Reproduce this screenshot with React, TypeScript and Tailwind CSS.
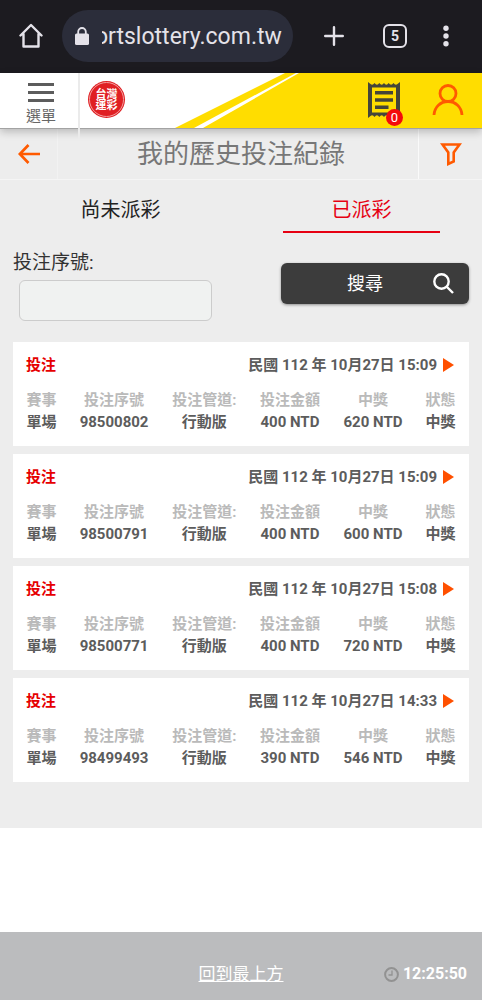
import { ReactNode, useEffect, useRef, useState } from "react";

interface Bet {
  type: string;
  serial: string;
  channel: string;
  amount: string;
  prize: string;
  status: string;
  date: string;
}

const bets: Bet[] = [
  {
    type: "單場",
    serial: "98500802",
    channel: "行動版",
    amount: "400 NTD",
    prize: "620 NTD",
    status: "中獎",
    date: "民國 112 年 10月27日 15:09",
  },
  {
    type: "單場",
    serial: "98500791",
    channel: "行動版",
    amount: "400 NTD",
    prize: "600 NTD",
    status: "中獎",
    date: "民國 112 年 10月27日 15:09",
  },
  {
    type: "單場",
    serial: "98500771",
    channel: "行動版",
    amount: "400 NTD",
    prize: "720 NTD",
    status: "中獎",
    date: "民國 112 年 10月27日 15:08",
  },
  {
    type: "單場",
    serial: "98499493",
    channel: "行動版",
    amount: "390 NTD",
    prize: "546 NTD",
    status: "中獎",
    date: "民國 112 年 10月27日 14:33",
  },
];

const columns = ["賽事", "投注序號", "投注管道:", "投注金額", "中獎", "狀態"];

const BrowserBar = () => {
  const urlRef = useRef<HTMLInputElement>(null);

  // keep the end of the address in view
  useEffect(() => {
    if (urlRef.current) {
      urlRef.current.scrollLeft = urlRef.current.scrollWidth;
    }
  }, []);

  return (
    <div className="flex items-center bg-[#1c1b20] pt-[10px] pb-[11px] text-[#e4e2e9]">
      <button aria-label="Home" className="flex w-[62px] justify-center">
        <svg width="24" height="26" viewBox="0 0 24 26" fill="none" stroke="currentColor" strokeWidth="2.4" strokeLinejoin="round" strokeLinecap="round">
          <path d="M1.5 12.5 L12 2 L22.5 12.5 M4.5 11 V23.5 H19.5 V11" />
        </svg>
      </button>
      <div className="flex h-[52px] min-w-0 flex-1 items-center rounded-full bg-[#2b2d3a] pr-[11px] pl-[13px]">
        <svg className="shrink-0" width="14" height="18" viewBox="0 0 14 18">
          <path d="M3.2 8 V4.8 a3.8 3.8 0 0 1 7.6 0 V8" fill="none" stroke="currentColor" strokeWidth="1.8" />
          <rect x="0" y="6.5" width="14" height="11.5" rx="1.6" fill="currentColor" />
        </svg>
        <input
          ref={urlRef}
          type="text"
          aria-label="Address"
          defaultValue="ortslottery.com.tw"
          className="ml-[13px] min-w-0 flex-1 bg-transparent pt-[3px] text-[23px] outline-none"
        />
      </div>
      <button aria-label="New tab" className="ml-[11px] flex w-[60px] justify-center">
        <svg width="20" height="20" viewBox="0 0 20 20" stroke="currentColor" strokeWidth="2.4" strokeLinecap="round">
          <path d="M1.2 10 H18.8 M10 1.2 V18.8" />
        </svg>
      </button>
      <button className="flex w-[62px] justify-center">
        <span className="flex h-6 w-6 items-center justify-center rounded-md border-2 border-[#e4e2e9] text-sm font-bold">5</span>
      </button>
      <button aria-label="More" className="mr-4 flex w-10 justify-center">
        <svg width="6" height="22" viewBox="0 0 6 22" fill="currentColor">
          <circle cx="3" cy="3.2" r="2.7" />
          <circle cx="3" cy="11" r="2.7" />
          <circle cx="3" cy="18.8" r="2.7" />
        </svg>
      </button>
    </div>
  );
};

const SiteHeader = () => {
  return (
    <header className="relative z-10 flex h-14 border-b border-[#a3a3a3] bg-white shadow-[0_3px_8px_rgba(0,0,0,0.22)]">
      <button className="flex w-[78px] flex-col items-center pt-[10px] pl-1 text-[#666]">
        <svg width="26" height="20" viewBox="0 0 26 20" stroke="#5c5c5c" strokeWidth="3">
          <path d="M0 1.5 H26 M0 9.5 H26 M0 17.5 H26" />
        </svg>
        <span className="mt-[5px] text-[15px] leading-4">選單</span>
      </button>
      <div className="h-[66px] w-0.5 shrink-0 bg-[#ebebeb]"></div>
      <a href="#" aria-label="台灣運彩" className="mt-2 ml-2 flex h-[37px] w-[37px] shrink-0 items-center justify-center rounded-full bg-[#e01f23] p-px">
        <span className="flex h-full w-full flex-col items-center justify-center rounded-full border border-[#f3a0a0] text-[11px] leading-[11px] font-bold text-white">
          <span>台灣</span>
          <span>運彩</span>
        </span>
      </a>
      <div className="flex min-w-0 flex-1">
        <svg className="h-full w-[180px] shrink-0" viewBox="0 0 180 56" preserveAspectRatio="none">
          <path d="M50 56 L160 0 H180 V56 Z" fill="#ffdd00" />
          <path d="M69 56 L171 0 H174 L78 56 Z" fill="#fff" />
        </svg>
        <div className="flex flex-1 justify-end bg-[#ffdd00]">
          <button aria-label="投注單" className="relative mt-[9px] mr-8 h-9 w-8">
            <svg width="32" height="36" viewBox="0 0 32 36">
              <path
                d="M0 0 L2.5 2 Q4.5 4 6.5 1 Q9 4.5 11.3 1 Q13.7 4.5 16 1 Q18.3 4.5 20.7 1 Q23 4.5 25.5 1 Q27.5 4 29.5 2 L32 0 V36 L29.5 34 Q27.5 32 25.5 35 Q23 31.5 20.7 35 Q18.3 31.5 16 35 Q13.7 31.5 11.3 35 Q9 31.5 6.5 35 Q4.5 32 2.5 34 L0 36 Z"
                fill="#454539"
              />
              <rect x="4" y="5.5" width="24" height="25" fill="#ffdd00" />
              <path d="M7 10.7 H25 M7 18 H25 M7 25.2 H20.5" stroke="#454539" strokeWidth="3.6" />
            </svg>
            <span className="absolute top-[27px] left-[18px] flex h-[17px] w-[17px] items-center justify-center rounded-full bg-[#f40b0b] text-[13px] text-white">0</span>
          </button>
          <button aria-label="會員" className="mt-[11px] mr-[18px] h-8">
            <svg width="32" height="32" viewBox="0 0 32 32" fill="none" stroke="#ff5a00" strokeWidth="2.8">
              <circle cx="16" cy="9.5" r="8" />
              <path d="M2 31 C2.5 23 8.5 17.5 16 17.5 S29.500 23 30 31" />
            </svg>
          </button>
        </div>
      </div>
    </header>
  );
};

const TitleBar = () => {
  return (
    <div className="flex h-[51px] items-stretch border-b border-[#f5f5f5]">
      <button aria-label="返回" className="flex w-[58px] items-center justify-center border-r border-[#f2f2f2]">
        <svg width="22" height="20" viewBox="0 0 22 20" fill="none" stroke="#ff5a00" strokeWidth="2.7">
          <path d="M22 10 H2 M10.500 1 L1.800 10 L10.500 19" />
        </svg>
      </button>
      <h1 className="flex flex-1 items-center justify-center pl-1.5 text-[26px] text-[#777]">我的歷史投注紀錄</h1>
      <button aria-label="篩選" className="flex w-16 items-center justify-center border-l border-[#fafafa]">
        <svg width="22" height="23" viewBox="0 0 22 23" fill="none" stroke="#ff5a00" strokeWidth="2.6">
          <path d="M2.500 1.500 H19.500 L13.700 9.500 V18.500 L8.300 21 V9.500 Z" />
        </svg>
      </button>
    </div>
  );
};

interface TabProps {
  active: boolean;
  onClick: () => void;
  children: ReactNode;
}

const Tab = ({ active, onClick, children }: TabProps) => {
  return (
    <button role="tab" aria-selected={active} onClick={onClick} className="flex flex-1 justify-center text-xl">
      <span
        className={
          active
            ? "w-[65%] border-b-2 border-[#e60012] pt-4 pb-[7px] text-[#e60012]"
            : "w-[65%] border-b-2 border-transparent pt-4 pb-[7px] text-[#222]"
        }
      >
        {children}
      </span>
    </button>
  );
};

const SearchForm = () => {
  const [serial, setSerial] = useState("");

  return (
    <form className="flex justify-between px-[13px] pt-4" onSubmit={(e) => e.preventDefault()}>
      <div className="flex flex-col">
        <label htmlFor="serial" className="text-[19px] leading-7 text-[#333]">
          投注序號:
        </label>
        <input
          id="serial"
          type="text"
          value={serial}
          onChange={(e) => setSerial(e.target.value)}
          className="mt-[3px] ml-1.5 h-[41px] w-[193px] rounded-md border border-[#ccc] bg-[#f0f2f1] px-2"
        />
      </div>
      <button
        type="submit"
        className="mt-[14px] flex h-[41px] w-[188px] items-center justify-end rounded-md bg-[#3c3c3c] pr-[15px] text-lg text-white shadow-[0_1px_3px_rgba(0,0,0,0.4)]"
      >
        <span className="mr-[50px]">搜尋</span>
        <svg width="21" height="21" viewBox="0 0 21 21" fill="none" stroke="#fff" strokeWidth="2.4">
          <circle cx="8.500" cy="8.500" r="7.200" />
          <path d="M13.500 13.500 L20 20" />
        </svg>
      </button>
    </form>
  );
};

const BetCard = ({ bet }: { bet: Bet }) => {
  return (
    <li className="bg-white px-[13px] pt-[11px] pb-[13px] text-[15px] font-bold">
      <div className="flex items-center leading-6">
        <h2 className="flex-1 text-[#e60000]">投注</h2>
        <span className="text-[#5c5c5c]">{bet.date}</span>
        <button aria-label="詳細" className="mr-0.5 ml-1.5">
          <svg width="11" height="14" viewBox="0 0 11 14" fill="#ff5000">
            <path d="M0 0 L11 7 L0 14 Z" />
          </svg>
        </button>
      </div>
      <table className="mt-3 w-full text-center leading-[22px] whitespace-nowrap">
        <thead className="text-[#bababa]">
          <tr>
            {columns.map((name) => (
              <th key={name} className="px-[11px] first:pl-0 last:pr-0">
                {name}
              </th>
            ))}
          </tr>
        </thead>
        <tbody className="text-[#5c5c5c]">
          <tr>
            <td className="pr-[11px]">{bet.type}</td>
            <td className="px-[11px]">{bet.serial}</td>
            <td className="px-[11px]">{bet.channel}</td>
            <td className="px-[11px]">{bet.amount}</td>
            <td className="px-[11px]">{bet.prize}</td>
            <td className="pl-[11px]">{bet.status}</td>
          </tr>
        </tbody>
      </table>
    </li>
  );
};

const App = () => {
  const [tab, setTab] = useState("paid");

  return (
    <div className="bg-white font-[Roboto,'Noto_Sans_CJK_TC',sans-serif]">
      <BrowserBar />
      <SiteHeader />
      <main className="bg-[#ededed] pb-[46px]">
        <TitleBar />
        <div role="tablist" className="flex">
          <Tab active={tab === "pending"} onClick={() => setTab("pending")}>
            尚未派彩
          </Tab>
          <Tab active={tab === "paid"} onClick={() => setTab("paid")}>
            已派彩
          </Tab>
        </div>
        <SearchForm />
        <ul className="mt-[21px] flex flex-col gap-2 px-[13px]">
          {bets.map((bet) => (
            <BetCard key={bet.serial} bet={bet} />
          ))}
        </ul>
      </main>
      <footer className="mt-[104px] grid grid-cols-[1fr_auto_1fr] items-center bg-[#bbbcbe] px-[15px] pt-[30px] pb-[14px] leading-6 text-white">
        <a href="#" className="col-start-2 text-[17px] underline">
          回到最上方
        </a>
        <div className="flex items-center justify-end gap-1">
          <svg width="15" height="15" viewBox="0 0 15 15" fill="none" stroke="#929292">
            <circle cx="7.500" cy="7.500" r="6.400" strokeWidth="2" />
            <path d="M8 3.500 V8 H4.500" strokeWidth="1.300" />
          </svg>
          <span className="text-base font-bold">12:25:50</span>
        </div>
      </footer>
    </div>
  );
};

export default App;
